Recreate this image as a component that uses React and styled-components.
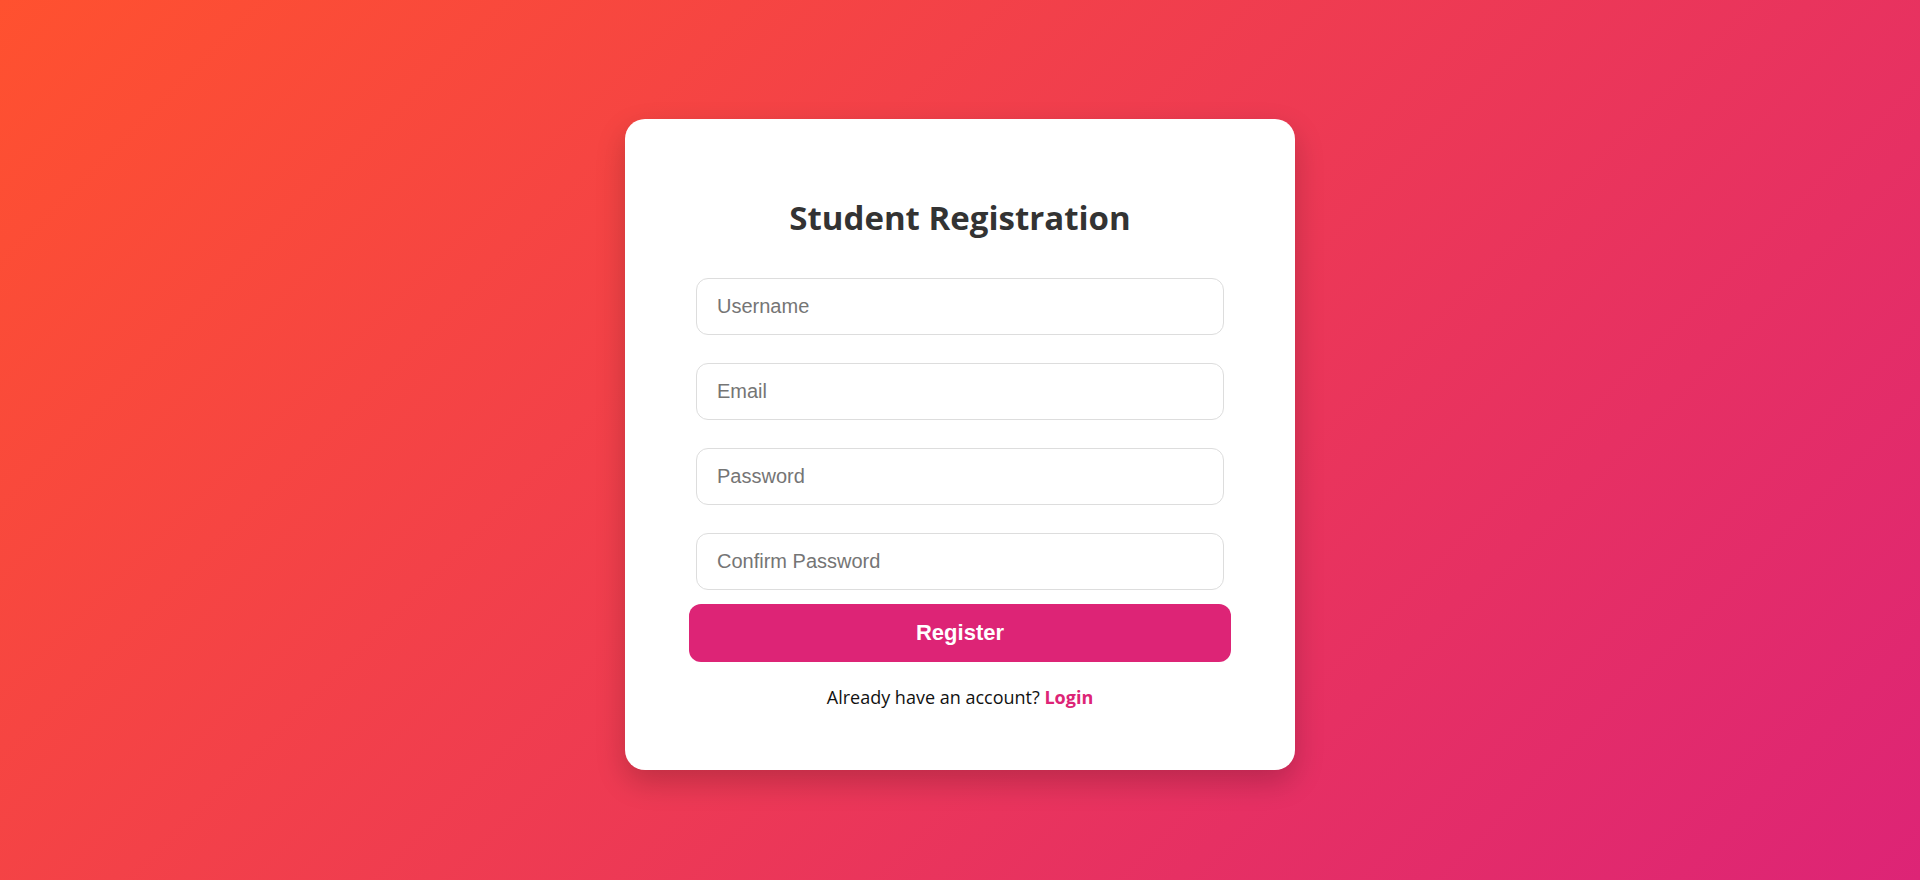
import React from 'react';
import styled, { createGlobalStyle } from 'styled-components';

const GlobalStyle = createGlobalStyle`
  * {
    box-sizing: border-box;
  }
  html, body {
    margin: 0;
    padding: 0;
  }
  body {
    font-family: 'Open Sans', 'Noto Sans', sans-serif;
    background: linear-gradient(135deg, #ff512f, #dd2476);
    min-height: 100vh;
  }
`;

const StyledPage = styled.main`
  min-height: 100vh;
  padding-top: 8px;
  display: flex;
  align-items: center;
  justify-content: center;
`;

const StyledCard = styled.section`
  width: 670px;
  background: #fff;
  border-radius: 20px;
  padding: 48px 64px 61px;
  box-shadow: 0 12px 30px rgba(0, 0, 0, 0.2);
  display: flex;
  flex-direction: column;
  align-items: stretch;
`;

const StyledTitle = styled.h2`
  margin: 29px 0 38px;
  text-align: center;
  font-family: 'Open Sans', 'Noto Sans', sans-serif;
  font-size: 33px;
  line-height: 44px;
  font-weight: 700;
  color: #333;
`;

const StyledForm = styled.form`
  display: flex;
  flex-direction: column;
`;

const StyledInput = styled.input`
  height: 57px;
  margin: 0 7px 28px;
  padding: 0 20px;
  border: 1px solid #ddd;
  border-radius: 12px;
  font-family: 'Liberation Sans', Arial, sans-serif;
  font-size: 20px;
  color: #333;
  outline: none;

  &::placeholder {
    color: #757575;
  }

  &:last-of-type {
    margin-bottom: 14px;
  }
`;

const StyledButton = styled.button`
  height: 58px;
  border: none;
  border-radius: 12px;
  background: #dd2476;
  color: #fff;
  font-family: 'Liberation Sans', Arial, sans-serif;
  font-size: 22px;
  font-weight: 700;
  cursor: pointer;
`;

const StyledFooter = styled.p`
  margin: 23px 0 0;
  text-align: center;
  font-family: 'Open Sans', 'Noto Sans', sans-serif;
  font-size: 18px;
  line-height: 24px;
  color: #111;

  a {
    color: #dd2476;
    font-weight: 700;
    text-decoration: none;
  }
`;

const App = () => (
  <>
    <GlobalStyle />
    <StyledPage>
      <StyledCard>
        <StyledTitle>Student Registration</StyledTitle>
        <StyledForm onSubmit={(e) => e.preventDefault()}>
          <StyledInput type="text" placeholder="Username" />
          <StyledInput type="email" placeholder="Email" />
          <StyledInput type="password" placeholder="Password" />
          <StyledInput type="password" placeholder="Confirm Password" />
          <StyledButton type="submit">Register</StyledButton>
        </StyledForm>
        <StyledFooter>
          Already have an account? <a href="#login">Login</a>
        </StyledFooter>
      </StyledCard>
    </StyledPage>
  </>
);

export default App;
